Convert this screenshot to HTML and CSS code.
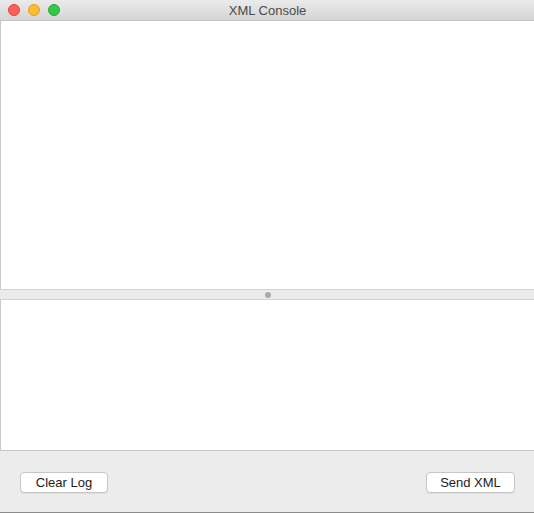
FILE: index.html
```html
<!DOCTYPE html>
<html>
<head>
<meta charset="utf-8">
<link rel="stylesheet" href="styles.css">
</head>
<body>
<div class="window">
  <div class="titlebar">
    <div class="lights">
      <span class="light red"></span>
      <span class="light yellow"></span>
      <span class="light green"></span>
    </div>
    <div class="title">XML Console</div>
  </div>
  <div class="pane top-pane"></div>
  <div class="splitter"><span class="dot"></span></div>
  <div class="pane bottom-pane"></div>
  <div class="footer">
    <button class="btn btn-clear">Clear Log</button>
    <button class="btn btn-send">Send XML</button>
  </div>
</div>
</body>
</html>
```
FILE: styles.css
```css
html, body {
  margin: 0;
  padding: 0;
  background: #ffffff;
}
.window {
  width: 534px;
  height: 513px;
  display: flex;
  flex-direction: column;
  font-family: "Liberation Sans", Arial, sans-serif;
  box-sizing: border-box;
  border-bottom: 1px solid #8a8a8a;
}
.titlebar {
  height: 20px;
  flex: none;
  position: relative;
  display: flex;
  align-items: center;
  justify-content: center;
  background: linear-gradient(#ebebeb, #d5d5d5);
  border-bottom: 1px solid #c4c4c4;
}
.lights {
  position: absolute;
  left: 8px;
  top: 4px;
  display: flex;
  gap: 8px;
}
.light {
  width: 12px;
  height: 12px;
  border-radius: 50%;
  box-sizing: border-box;
}
.red { background: #fc5f57; border: 1px solid #e0443e; }
.yellow { background: #fdbc2e; border: 1px solid #dea123; }
.green { background: #33c748; border: 1px solid #27aa35; }
.title {
  font-size: 13px;
  color: #4a4a4a;
  margin-left: 1px;
}
.pane {
  background: #ffffff;
  border-left: 1px solid #c8c8c8;
  flex: none;
}
.top-pane {
  height: 268px;
}
.splitter {
  height: 9px;
  flex: none;
  background: #ebebeb;
  border-top: 1px solid #d2d2d2;
  border-bottom: 1px solid #d2d2d2;
  display: flex;
  align-items: center;
  justify-content: center;
}
.dot {
  width: 6px;
  height: 6px;
  border-radius: 50%;
  background: #a9a9a9;
  margin-left: 1px;
}
.bottom-pane {
  height: 150px;
  border-bottom: 1px solid #c8c8c8;
}
.footer {
  flex: 1;
  background: #ececec;
  display: flex;
  justify-content: space-between;
  align-items: flex-start;
  padding: 21px 19px 0 20px;
}
.btn {
  font-family: "Liberation Sans", Arial, sans-serif;
  font-size: 13px;
  color: #222;
  background: #ffffff;
  border: 1px solid #c6c6c6;
  border-radius: 4px;
  height: 21px;
  padding: 0;
  text-align: center;
  box-shadow: 0 1px 0 rgba(0,0,0,0.06);
  line-height: 19px;
}
.btn-clear { width: 88px; }
.btn-send { width: 89px; }
```
